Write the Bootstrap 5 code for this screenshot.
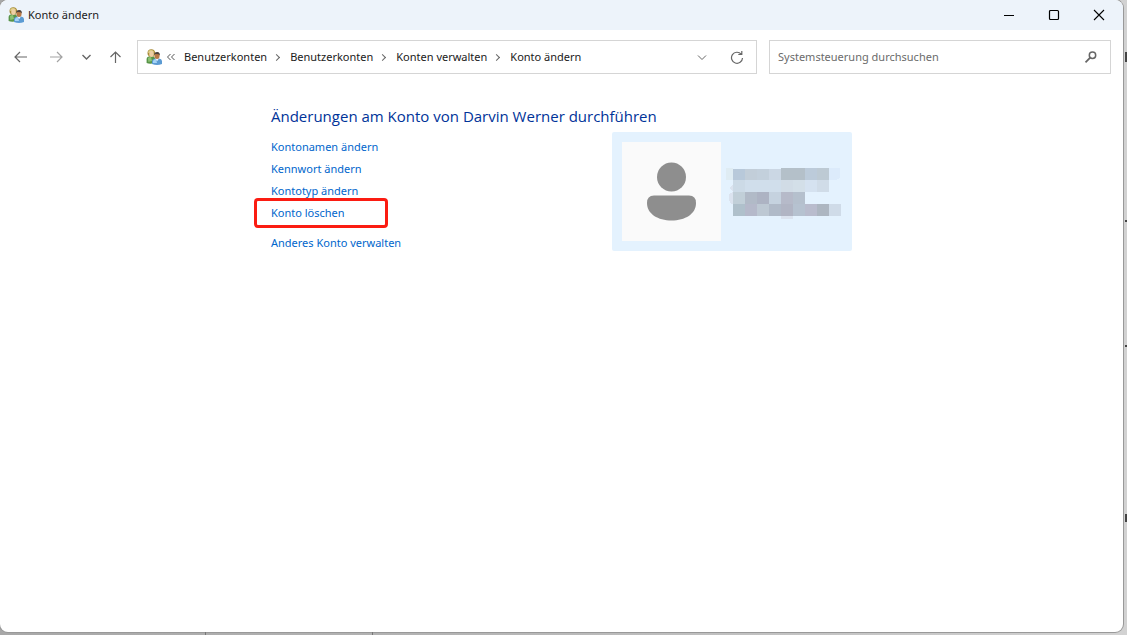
<!DOCTYPE html>
<html lang="de">
<head>
<meta charset="utf-8">
<meta name="viewport" content="width=device-width, initial-scale=1">
<title>Konto ändern</title>
<link href="https://cdn.jsdelivr.net/npm/bootstrap@5.3.0/dist/css/bootstrap.min.css" rel="stylesheet">
<style>
  body {
    font-family: "Noto Sans", "Open Sans", sans-serif;
    font-size: 11px;
    line-height: 22px;
    color: #1a1a1a;
    background: linear-gradient(90deg, #a8a8a8, #b4b4b4 40%, #d2d2d2);
  }
  .desktop { padding: 0 4px 3px 0; overflow: hidden; }
  .app-window { background: #fff; border-radius: 8px; box-shadow: 0 0 0 1px #999; }
  .title-bar { height: 30px; background: #edf3fa; border-radius: 8px 8px 0 0; padding: 0 2px 0 8px; }
  .people { width: 16px; height: 16px; }
  .win-btn, .tool-btn { border: 0; padding: 0; background: none; display: flex; align-items: center; justify-content: center; }
  .win-btn { width: 45px; height: 30px; color: #000; }
  .tool-btn { height: 34px; color: #666; }
  .tool-bar { padding: 10px 12px 0 8px; }
  .address { flex: 1 1 620px; height: 34px; border: 1px solid #d5d5d5; padding: 0 6px 0 8px; margin-left: 11px; min-width: 0; }
  .search { flex: 1 1 342px; height: 34px; border: 1px solid #d5d5d5; padding: 0 11px 0 8px; margin-left: 12px; min-width: 0; }
  .search input { border: 0; outline: 0; padding: 0; min-width: 0; background: none; }
  .search input::placeholder { color: #6b6b6b; opacity: 1; }
  .crumbs a { color: #1a1a1a; }
  .crumbs li { display: flex; align-items: center; }
  .crumbs li + li::before { content: ""; width: 5px; height: 5px; margin: 0 11px 0 7px; border: solid #666; border-width: 1px 1px 0 0; transform: rotate(45deg); }
  .account-page { width: 581px; max-width: 100%; padding-top: 30px; }
  .account-page h1 { font-family: "Open Sans", "Noto Sans", sans-serif; font-size: 15px; line-height: 24px; font-weight: 400; color: #003399; margin: 0 0 4px; }
  .tasks { padding-top: 4px; }
  .tasks a { color: #0066cc; }
  .marked { position: relative; }
  .marked::after { content: ""; position: absolute; left: -17px; top: -4px; width: 134px; height: 30px; border: 3px solid #fb1c12; border-radius: 4px; pointer-events: none; }
  .account-tile { width: 240px; height: 119px; background: #e4f2fe; border-radius: 2px; padding: 10px; }
  .avatar { width: 99px; height: 99px; background: #fafafa; }
  .behind { position: absolute; right: 0; width: 2px; background: #444; }
  .behind-low { position: absolute; bottom: 0; width: 1px; height: 3px; background: #777; }
</style>
</head>
<body>
<svg class="d-none" aria-hidden="true">
  <symbol id="people" viewBox="0 0 16 16">
    <path d="M.6 14V10Q1 7.500 4 7.300H7.500L9 9V14Q4 15.500.6 14Z" fill="#589448"/>
    <path d="M2 9Q3 8 5 8L6 12 2.300 13Z" fill="#8cc274"/>
    <circle cx="5.300" cy="4" r="3.800" fill="#a88a37"/>
    <path d="M2.200 4Q2 1 5 1 8 1 8 4L7 3Z" fill="#ded188"/>
    <ellipse cx="5.500" cy="5" rx="2.300" ry="2.900" fill="#edcfa5"/>
    <path d="M6 15V12Q6.500 9.500 9.500 9.500H13Q15.700 9.500 16 12V15Q11 17 6 15Z" fill="#5c9bd3"/>
    <path d="M7 14V12Q8 10 10 10L11 14Z" fill="#a5d3f5"/>
    <path d="M9.500 9.500 11 12.300 13 9.500Z" fill="#eef7ff"/>
    <ellipse cx="11" cy="6.800" rx="2.600" ry="3.200" fill="#b97a48"/>
    <path d="M8.200 6Q8 3 11.200 3 14.200 3 13.700 6.500L12.600 5.200 9.500 5.100Z" fill="#4a413d"/>
  </symbol>
</svg>
<div class="desktop position-relative vh-100">
  <i class="behind" style="top:52px;height:10px"></i>
  <i class="behind" style="top:220px;height:2px"></i>
  <i class="behind" style="top:345px;height:2px"></i>
  <i class="behind" style="top:514px;height:8px"></i>
  <i class="behind-low" style="left:205px"></i>
  <i class="behind-low" style="left:372px"></i>
  <main class="app-window h-100">
    <header class="title-bar d-flex align-items-center">
      <svg class="people"><use href="#people"/></svg>
      <span class="ms-1 me-auto">Konto ändern</span>
      <button class="win-btn" aria-label="Minimieren"><svg width="12" height="12"><path d="M1 6.500H11" stroke="currentColor"/></svg></button>
      <button class="win-btn" aria-label="Maximieren"><svg width="12" height="12" fill="none" stroke="currentColor" stroke-width="1.200"><rect x="1.500" y="1.500" width="9" height="9" rx="1"/></svg></button>
      <button class="win-btn" aria-label="Schließen"><svg width="12" height="12" stroke="currentColor" stroke-width="1.100"><path d="M1 1 11 11M11 1 1 11"/></svg></button>
    </header>
    <nav class="tool-bar d-flex align-items-center" aria-label="Navigation">
      <button class="tool-btn px-1" aria-label="Zurück"><svg width="18" height="14" fill="none" stroke="currentColor" stroke-width="1.200"><path d="M15 7H3M8 2 3 7 8 12"/></svg></button>
      <button class="tool-btn px-1 ms-2" aria-label="Vorwärts" disabled><svg width="18" height="14" fill="none" stroke="#a3a3a3" stroke-width="1.200"><path d="M4 7H16M11 2 16 7 11 12"/></svg></button>
      <button class="tool-btn px-1 ms-2" aria-label="Verlauf"><svg width="12" height="12" fill="none" stroke="currentColor" stroke-width="1.400"><path d="M2.500 4 6.500 8 10.500 4"/></svg></button>
      <button class="tool-btn px-1 ms-2" aria-label="Nach oben"><svg width="14" height="14" fill="none" stroke="currentColor" stroke-width="1.200"><path d="M7.500 13V2M2.500 7 7.500 2 12.500 7"/></svg></button>
      <div class="address d-flex align-items-center">
        <svg class="people flex-shrink-0"><use href="#people"/></svg>
        <svg class="flex-shrink-0 ms-1" width="10" height="10" fill="none" stroke="#555"><path d="M4.500 2 1.500 5 4.500 8M8.500 2 5.500 5 8.500 8"/></svg>
        <ol class="crumbs list-unstyled d-flex mb-0 ms-2 me-auto text-nowrap">
          <li><a class="text-decoration-none" href="#">Benutzerkonten</a></li>
          <li><a class="text-decoration-none" href="#">Benutzerkonten</a></li>
          <li><a class="text-decoration-none" href="#">Konten verwalten</a></li>
          <li><a class="text-decoration-none" href="#">Konto ändern</a></li>
        </ol>
        <button class="tool-btn px-2" aria-label="Vorherige Orte"><svg width="12" height="12" fill="none" stroke="currentColor"><path d="M2 4.500 6 8.500 10 4.500"/></svg></button>
        <button class="tool-btn px-1 ms-2" aria-label="Aktualisieren"><svg width="18" height="14" fill="none" stroke="currentColor" stroke-width="1.200"><path d="M13.200 4.200A5.500 5.500 0 1 0 14.500 8M13.800 1V4.500H10.300"/></svg></button>
      </div>
      <label class="search d-flex align-items-center">
        <input type="search" class="flex-grow-1" aria-label="Systemsteuerung durchsuchen" placeholder="Systemsteuerung durchsuchen">
        <svg width="16" height="14" fill="none" stroke="#666"><circle cx="9.500" cy="5.300" r="3.200" stroke-width="1.500"/><path d="M7.200 7.700 2.500 12.300" stroke-width="1.800"/></svg>
      </label>
    </nav>
    <section class="account-page mx-auto">
      <h1>Änderungen am Konto von Darvin Werner durchführen</h1>
      <div class="d-flex justify-content-between">
        <ul class="tasks list-unstyled mb-0">
          <li><a class="text-decoration-none" href="#">Kontonamen ändern</a></li>
          <li><a class="text-decoration-none" href="#">Kennwort ändern</a></li>
          <li><a class="text-decoration-none" href="#">Kontotyp ändern</a></li>
          <li class="marked"><a class="text-decoration-none" href="#">Konto löschen</a></li>
          <li class="mt-2"><a class="text-decoration-none" href="#">Anderes Konto verwalten</a></li>
        </ul>
        <div class="account-tile d-flex">
          <svg class="avatar flex-shrink-0" viewBox="0 0 99 99" fill="#8e8e8e"><circle cx="49.500" cy="35" r="14.500"/><path d="M32 53.500H67Q74 53.500 74 61C74 72 63 78.500 49.500 78.500S25 72 25 61Q25 53.500 32 53.500Z"/></svg>
          <svg class="flex-shrink-0" width="120" height="99" shape-rendering="crispEdges" role="img" aria-label="Unkenntlich gemachter Kontoname">
            <path fill="#dfecf3" d="M5 26h7v12H5z"/><path fill="#dcebfb" d="M108 26h11v10l-4 2h-7z"/>
            <path fill="#dbe3ef" d="M12 62h-2l-2-4v-6l4-2-4-4 4-4zM60 74h12v3H60z"/>
            <path fill="#b8c9da" d="M12 27h12v11H12z"/><path fill="#c2ced9" d="M24 27h12v11H24z"/><path fill="#c3d0dc" d="M36 27h12v11H36z"/><path fill="#cbd7e4" d="M48 27h12v11H48z"/><path fill="#b4c0c9" d="M60 26h24v12H60z"/><path fill="#bccbda" d="M84 26h12v12H84z"/><path fill="#bdcad4" d="M96 26h12v12H96z"/>
            <path fill="#ccdae6" d="M12 38h12v12H12z"/><path fill="#d0deeb" d="M24 38h36v12H24z"/><path fill="#d1dce6" d="M60 38h12v12H60z"/><path fill="#d3dfe8" d="M72 38h12v12H72z"/><path fill="#d5e2f0" d="M84 38h12v12H84z"/><path fill="#d0dce8" d="M96 38h12v12H96z"/>
            <path fill="#c1cfd8" d="M12 50h12v12H12z"/><path fill="#b1bac7" d="M24 50h12v12H24z"/><path fill="#adb3c3" d="M36 50h12v12H36z"/><path fill="#c5d2df" d="M48 50h12v12H48z"/><path fill="#b6bac9" d="M60 50h12v12H60z"/><path fill="#b5c0cd" d="M72 50h12v12H72z"/>
            <path fill="#afc0cb" d="M12 62h12v12H12z"/><path fill="#b5b9ca" d="M24 62h12v12H24z"/><path fill="#bdc8d3" d="M36 62h12v12H36z"/><path fill="#b0bac8" d="M48 62h12v12H48z"/><path fill="#b1b5c4" d="M60 62h12v12H60z"/><path fill="#b6c2d0" d="M72 62h12v12H72z"/><path fill="#b9bccd" d="M84 62h12v12H84z"/><path fill="#adb6c1" d="M96 62h12v12H96z"/><path fill="#cfdbe8" d="M108 62h12v12h-12z"/>
          </svg>
        </div>
      </div>
    </section>
  </main>
</div>
<script src="https://cdn.jsdelivr.net/npm/bootstrap@5.3.0/dist/js/bootstrap.bundle.min.js"></script>
</body>
</html>
